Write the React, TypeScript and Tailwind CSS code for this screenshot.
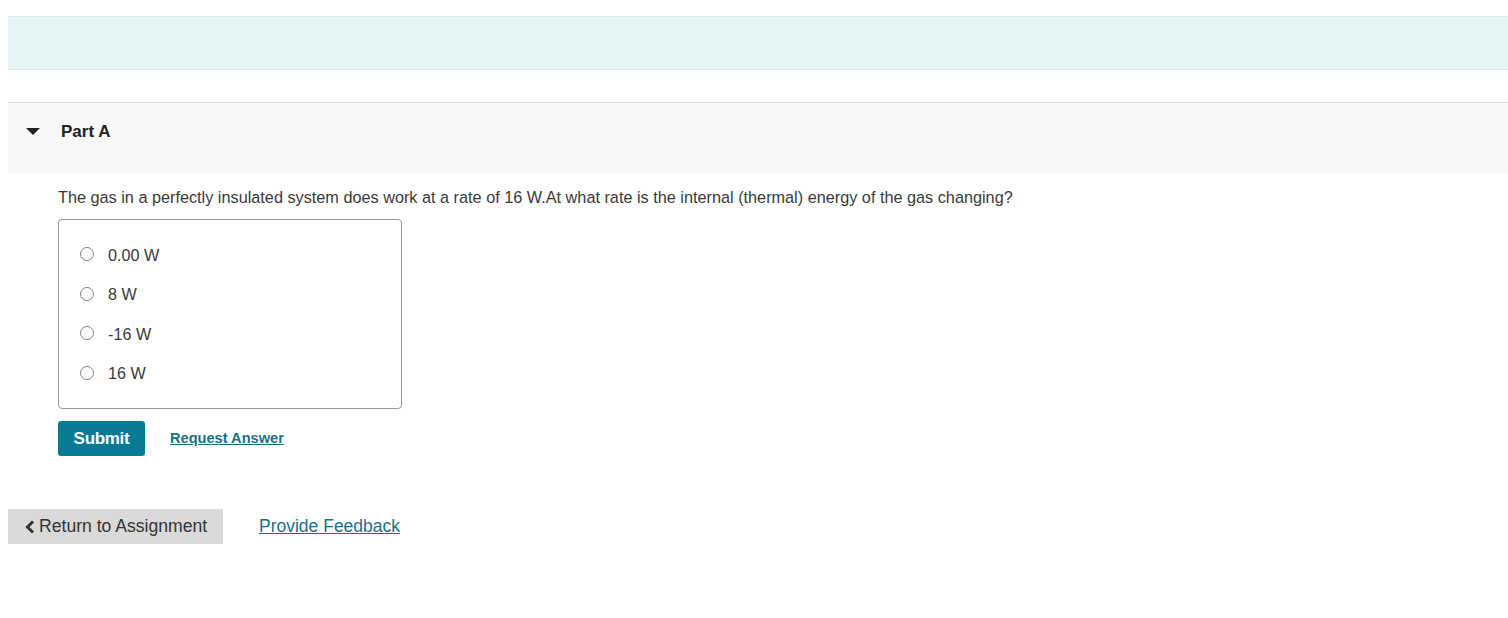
import React from "react";

const options = ["0.00 W", "8 W", "-16 W", "16 W"];

export default function App() {
  return (
    <div className="min-h-[618px] bg-white pl-2 pt-4 font-['Liberation_Sans',Arial,sans-serif] text-[#333]">
      <div className="h-[54px] border-y border-[#dde9e9] bg-[#e5f5f5]" />
      <div className="mt-[32px] border-t border-[#dcdcdc] bg-[#f8f8f8] h-[72px] flex items-start pt-[18px]">
        <svg width="14" height="8" viewBox="0 0 14 8" className="ml-[18px] mt-[7px]">
          <polygon points="0,0 14,0 7,7" fill="#222" />
        </svg>
        <span className="ml-[21px] text-[17px] leading-[22px] font-bold text-[#222]">Part A</span>
      </div>
      <div className="pl-[50px]">
        <p className="mt-[13px] text-[16.25px] leading-[20px] text-[#3a3a3a]">
          The gas in a perfectly insulated system does work at a rate of 16 W.At what rate is the internal (thermal) energy of the gas changing?
        </p>
        <div className="mt-[12px] w-[344px] h-[190px] rounded-[4px] border border-[#999] pt-[24px] pl-[21px] flex flex-col gap-[19.5px]">
          {options.map((o) => (
            <label key={o} className="flex items-center h-[20px]">
              <span className="w-[14px] h-[14px] rounded-full border border-[#808080] bg-white" />
              <span className="ml-[14px] text-[16.2px] text-[#3a3a3a] mt-[2px]">{o}</span>
            </label>
          ))}
        </div>
        <div className="mt-[12px] flex items-center">
          <button className="h-[35px] w-[87px] rounded-[3px] bg-[#087a94] text-white text-[17px] font-bold tracking-[-0.3px]">
            Submit
          </button>
          <a className="ml-[25px] text-[14.6px] font-bold underline text-[#1a7186]">Request Answer</a>
        </div>
      </div>
      <div className="mt-[53px] flex items-center">
        <button className="h-[35px] w-[215px] bg-[#d9d9d9] text-[17.6px] text-[#333] flex items-center pl-[17px]">
          <svg width="10" height="14" viewBox="0 0 10 14" className="mr-[4px]">
            <polyline points="8,1.5 2.5,7 8,12.5" fill="none" stroke="#333" strokeWidth="3" />
          </svg>
          Return to Assignment
        </button>
        <a className="ml-[36px] text-[17.5px] underline text-[#1a7186]">Provide Feedback</a>
      </div>
    </div>
  );
}
